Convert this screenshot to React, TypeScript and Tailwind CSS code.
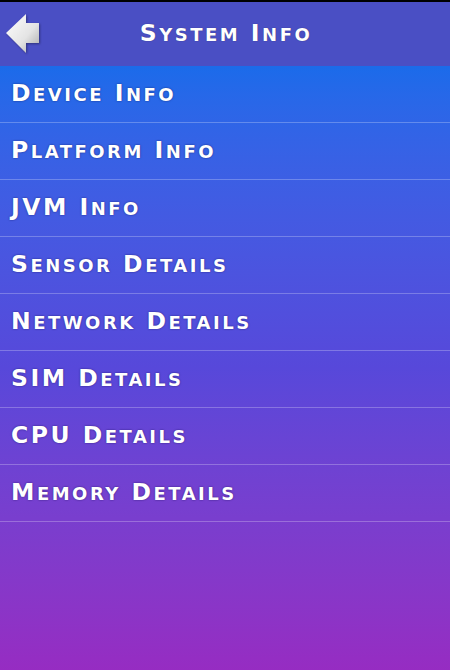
const items = [
  'Device Info',
  'Platform Info',
  'JVM Info',
  'Sensor Details',
  'Network Details',
  'SIM Details',
  'CPU Details',
  'Memory Details',
]

// Copperplate-like small caps: capitals at full size, lowercase letters as smaller capitals
function SmallCaps({ text }: { text: string }) {
  const parts: { s: string; lower: boolean }[] = []
  for (const ch of text) {
    const lower = ch !== ch.toUpperCase()
    const last = parts[parts.length - 1]
    if (last && last.lower === lower) last.s += ch
    else parts.push({ s: ch, lower })
  }
  return (
    <>
      {parts.map((p, i) =>
        p.lower ? (
          <span key={i} className="uppercase text-[18px]">
            {p.s}
          </span>
        ) : (
          <span key={i}>{p.s}</span>
        )
      )}
    </>
  )
}

function BackArrow() {
  return (
    <svg width="36" height="42" viewBox="0 0 36 42" className="drop-shadow-[1px_1px_1px_rgba(0,0,0,0.35)]">
      <defs>
        <linearGradient id="arrowFill" x1="0" y1="0" x2="1" y2="1">
          <stop offset="0%" stopColor="#ffffff" />
          <stop offset="60%" stopColor="#e4e4e4" />
          <stop offset="100%" stopColor="#a8a8a8" />
        </linearGradient>
      </defs>
      <path d="M1 20 L21 1 L21 10 L34 10 L34 30 L21 30 L21 40 Z" fill="url(#arrowFill)" />
    </svg>
  )
}

export default function App() {
  return (
    <div className="w-[450px] h-[670px] flex flex-col bg-black font-['DejaVu_Sans',sans-serif] text-white overflow-hidden">
      {/* Header */}
      <div className="mt-[2px] h-[64px] bg-[#4a4fc4] flex items-center relative">
        <button className="absolute left-[5px] top-[11px]" aria-label="Back">
          <BackArrow />
        </button>
        <h1 className="w-full pl-[2px] text-center text-[23.5px] leading-none font-bold tracking-[2.5px] [text-shadow:0_0_1px_rgba(0,0,0,0.5)]">
          <SmallCaps text="System Info" />
        </h1>
      </div>

      {/* List */}
      <div className="flex-1 bg-gradient-to-b from-[#1a6bea] via-[#5748da] to-[#962cc2]">
        {items.map((item) => (
          <div
            key={item}
            className="h-[57px] flex items-center px-[11px] border-b border-white/25"
          >
            <span className="text-[23.5px] leading-none font-bold tracking-[2.5px] [text-shadow:0_0_2px_rgba(0,0,60,0.6)]">
              <SmallCaps text={item} />
            </span>
          </div>
        ))}
      </div>
    </div>
  )
}
